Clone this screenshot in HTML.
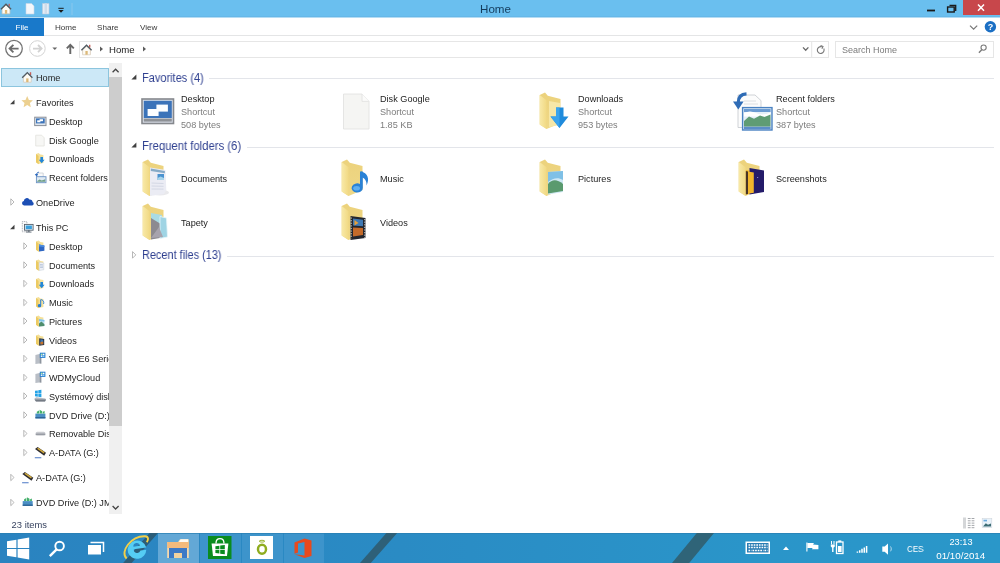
<!DOCTYPE html>
<html><head><meta charset="utf-8"><title>Home</title>
<style>
*{box-sizing:border-box;margin:0;padding:0}
html,body{width:1000px;height:563px;overflow:hidden;background:#fff;font-family:"Liberation Sans",sans-serif;font-size:9.1px;color:#1e1e1e}
.a{position:absolute}
svg{position:absolute;overflow:visible}
#title{left:0;top:0;width:1000px;height:18px;background:#6abfef;border-bottom:1px solid #b4dcf4;box-shadow:inset 0 -1px 0 #66b8e8}
#ttl{left:400px;width:191px;top:2px;text-align:center;font-size:11.6px;color:#143c5c;line-height:14px}
#close{left:963px;top:0;width:37px;height:15px;background:#c8474b}
#ribbon{left:0;top:18px;width:1000px;height:18.400px;background:#fff;border-bottom:1px solid #e4e5e6}
#file{left:0;top:18px;width:44px;height:17.500px;background:#1979ca;color:#fff;text-align:center;line-height:19.600px;font-size:8.100px}
.tab{top:18px;height:18px;line-height:19.600px;font-size:8.100px;color:#3a3a3a}
#addr{left:79px;top:41px;width:750px;height:17px;border:1px solid #e6e6e6;background:#fff}
#search{left:835px;top:41px;width:159px;height:17px;border:1px solid #e6e6e6;background:#fff;color:#7b7b7b;font-size:9px;line-height:15px;padding-left:6px;padding-top:1px}
#sb{left:109px;top:63px;width:13px;height:451px;background:#f0f0f0}
#thumb{left:109px;top:77px;width:13px;height:349px;background:#cdcdcd}
.n,.it,.hdr,.tab,#file,#ttl,#search,#status,.tray,.gs{will-change:transform}
.n{position:absolute;white-space:nowrap;font-size:9.15px;color:#1e1e1e;line-height:12px;height:12px;overflow:hidden}
#sel{left:1px;top:68px;width:108px;height:18.500px;background:#cce8f7;border:1px solid #8cc5de}
.hdr{position:absolute;font-size:12px;line-height:14px;color:#2f4090;white-space:nowrap;transform-origin:0 50%;transform:scaleX(.935)}
.ln{position:absolute;height:1px;background:#e3e5ea}
.it{position:absolute;font-size:9.15px;line-height:12px;white-space:nowrap;color:#1e1e1e}
.it span{color:#7d7d7d}
#status{left:0;top:514px;width:1000px;height:19px;background:#fff;font-size:9.400px;color:#36425f}
#task{left:0;top:533px;width:1000px;height:30px;background:linear-gradient(90deg,#2a83c0 0%,#2a8bc4 40%,#2a95c9 75%,#2a97c9 100%);overflow:hidden}
.tb{position:absolute;top:0;height:30px}
.tray{position:absolute;color:#fff;font-size:9.2px;white-space:nowrap}
</style></head><body>
<div id="title" class="a"><div id="ttl" class="a">Home</div><div id="close" class="a"></div>
<svg class="a" style="left:0;top:0" width="1000" height="18" viewBox="0 0 1000 18">
<!-- quick access icons -->
<g id="house1"><g transform="translate(.2,2.600)"><path d="M1.900 6.200v5h7.800v-5L5.800 2.400z" fill="#fdfbf5" stroke="#d2c4b2" stroke-width=".7"/><rect x="8.300" y="1.200" width="1.400" height="2.800" fill="#c8605a"/><path d="M.7 6.700L5.800 1.600l5.100 5.100" fill="none" stroke="#505a62" stroke-width="1.300"/><rect x="4.700" y="7.400" width="2.300" height="3.700" fill="#dcb878"/></g></g>
<path d="M26 3.5h5.5l2.5 2.5v8h-8z" fill="#f4f7fb" stroke="#c9d6e6" stroke-width=".6"/>
<path d="M42.5 3.5h6.5v10.5h-6.5z" fill="#e6edf5" stroke="#bccbdc" stroke-width=".6"/><path d="M44.5 3.5h2.5v10.5h-2.5z" fill="#cfdcea"/>
<rect x="58.3" y="7.8" width="5.4" height="1" fill="#1a1a1a"/><path d="M58.3 10 h5.4 l-2.7 2.8z" fill="#1a1a1a"/>
<rect x="71.5" y="3" width="1" height="12" fill="#88c8ee"/>
<!-- window buttons -->
<rect x="927" y="9.6" width="8" height="1.8" fill="#1a1a1a"/>
<path d="M949.5 5.3h6.2v5.6" fill="none" stroke="#1a1a1a" stroke-width="1.3"/><rect x="947.6" y="7" width="6.6" height="5" fill="none" stroke="#1a1a1a" stroke-width="1.4"/>
<path d="M978 4.5l6 6.2M984 4.5l-6 6.2" stroke="#fff" stroke-width="1.5"/>
</svg></div>
<div id="ribbon" class="a"></div><div id="file" class="a">File</div>
<div class="tab a" style="left:54.5px">Home</div><div class="tab a" style="left:97px">Share</div><div class="tab a" style="left:139.5px">View</div>
<svg class="a" style="left:0;top:18px" width="1000" height="19" viewBox="0 0 1000 19">
<path d="M970 7.6l3.6 3.6 3.6-3.6" fill="none" stroke="#777" stroke-width="1.2"/>
<circle cx="990.400" cy="8.700" r="5.700" fill="#1b6fc4"/><text x="990.400" y="12.2" font-family="Liberation Sans" font-weight="bold" font-size="9" fill="#fff" text-anchor="middle">?</text>
</svg>
<div id="addr" class="a"></div><div id="search" class="a">Search Home</div>
<svg class="a" style="left:0;top:37px" width="1000" height="26" viewBox="0 37 1000 26">
<circle cx="14" cy="48.6" r="8.3" fill="#fff" stroke="#747474" stroke-width="1.3"/>
<path d="M18.6 48.6h-8.600M13.400 44.800l-3.800 3.800 3.800 3.800" fill="none" stroke="#6c6c6c" stroke-width="1.900"/>
<circle cx="37.4" cy="48.5" r="7.8" fill="#fff" stroke="#d3d3d3" stroke-width="1"/>
<path d="M33 48.6h8.400M38 45l3.600 3.600-3.600 3.600" fill="none" stroke="#d2d2d2" stroke-width="1.800"/>
<path d="M52.4 47.4h4.8l-2.4 2.6z" fill="#666"/>
<path d="M70.3 54v-8.600M66.800 48.400l3.500-3.500 3.500 3.500" fill="none" stroke="#686868" stroke-width="1.900"/>
<g transform="translate(80.5,41)"><g transform="translate(.2,2.600)"><path d="M1.900 6.200v5h7.800v-5L5.800 2.400z" fill="#fdfbf5" stroke="#d2c4b2" stroke-width=".7"/><rect x="8.300" y="1.200" width="1.400" height="2.800" fill="#c8605a"/><path d="M.7 6.700L5.800 1.600l5.100 5.100" fill="none" stroke="#505a62" stroke-width="1.300"/><rect x="4.700" y="7.400" width="2.300" height="3.700" fill="#dcb878"/></g></g>
<path d="M100 46.600l3 2.500-3 2.500z" fill="#5c5c5c"/>
<path d="M143 46.600l3 2.500-3 2.500z" fill="#5c5c5c"/>
<path d="M803 47.4l2.700 2.900 2.700-2.900" fill="none" stroke="#6a6a6a" stroke-width="1.300"/>
<rect x="811.200" y="42" width="1" height="15" fill="#e4e4e4"/>
<path d="M823.800 48.600a3.400 3.400 0 1 1-2-1.800" fill="none" stroke="#777" stroke-width="1.100"/><path d="M820.600 45.400l2.400 1.100-1.100 2.300" fill="none" stroke="#777" stroke-width="1.100"/>
<circle cx="983.600" cy="47.600" r="2.600" fill="none" stroke="#7a7a7a" stroke-width="1.100"/><path d="M981.700 49.700l-2.800 3" stroke="#7a7a7a" stroke-width="1.300"/>
</svg>
<div class="a gs" style="left:109.300px;top:43px;font-size:9.6px;line-height:14px;color:#222">Home</div>
<div id="sel" class="a"></div>
<div id="sb" class="a"></div><div id="thumb" class="a"></div>
<svg class="a" style="left:109px;top:63px" width="13" height="451" viewBox="0 0 13 451"><path d="M3.6 9.2l3-3 3 3" fill="none" stroke="#444" stroke-width="1.3"/><path d="M3.6 443l3 3 3-3" fill="none" stroke="#444" stroke-width="1.3"/></svg>
<div class="n" style="left:36.4px;top:72px;width:72.6px">Home</div>
<div class="n" style="left:36.4px;top:97px;width:72.6px">Favorites</div>
<div class="n" style="left:49.3px;top:116px;width:59.7px">Desktop</div>
<div class="n" style="left:49.3px;top:135px;width:59.7px">Disk Google</div>
<div class="n" style="left:49.3px;top:153px;width:59.7px">Downloads</div>
<div class="n" style="left:49.3px;top:172px;width:59.7px">Recent folders</div>
<div class="n" style="left:36.4px;top:197px;width:72.6px">OneDrive</div>
<div class="n" style="left:36.4px;top:222px;width:72.6px">This PC</div>
<div class="n" style="left:49.3px;top:241px;width:59.7px">Desktop</div>
<div class="n" style="left:49.3px;top:260px;width:59.7px">Documents</div>
<div class="n" style="left:49.3px;top:278px;width:59.7px">Downloads</div>
<div class="n" style="left:49.3px;top:297px;width:59.7px">Music</div>
<div class="n" style="left:49.3px;top:316px;width:59.7px">Pictures</div>
<div class="n" style="left:49.3px;top:335px;width:59.7px">Videos</div>
<div class="n" style="left:49.3px;top:353px;width:59.7px">VIERA E6 Serie</div>
<div class="n" style="left:49.3px;top:372px;width:59.7px">WDMyCloud</div>
<div class="n" style="left:49.3px;top:391px;width:59.7px">Systémový disk</div>
<div class="n" style="left:49.3px;top:410px;width:59.7px">DVD Drive (D:) JM</div>
<div class="n" style="left:49.3px;top:428px;width:59.7px">Removable Disk</div>
<div class="n" style="left:49.3px;top:447px;width:59.7px">A-DATA (G:)</div>
<div class="n" style="left:36.4px;top:472px;width:72.6px">A-DATA (G:)</div>
<div class="n" style="left:36.4px;top:497px;width:72.6px">DVD Drive (D:) JM</div>
<svg class="a" style="left:0;top:0" width="109" height="533" viewBox="0 0 109 533"><g transform="translate(21.5,71) scale(1)"><path d="M1.900 6.200v5h7.800v-5L5.800 2.400z" fill="#fdfbf5" stroke="#d2c4b2" stroke-width=".7"/><rect x="8.300" y="1.200" width="1.400" height="2.800" fill="#c8605a"/><path d="M.7 6.700L5.800 1.600l5.100 5.100" fill="none" stroke="#505a62" stroke-width="1.300"/><rect x="4.700" y="7.400" width="2.300" height="3.700" fill="#dcb878"/></g><g transform="translate(21.5,96) scale(1)"><path d="M5.7 0l1.7 3.9 4.1.4-3.1 2.8.9 4.1-3.6-2.1-3.6 2.1.9-4.1L-.1 4.3l4.1-.4z" fill="#ecd090"/></g><path d="M14.5 99.8v4.400h-4.400z" fill="#404040"/><g transform="translate(34.2,115) scale(1)"><rect x=".5" y="2.200" width="11.300" height="8.400" fill="#dfe6ee" stroke="#8a8f98" stroke-width="1"/><rect x="1.800" y="3.400" width="8.700" height="5" fill="#3c74ba"/><rect x="3" y="5.300" width="3.200" height="2" fill="#fff"/><rect x="5.400" y="4.200" width="3.400" height="2" fill="#fff"/></g><g transform="translate(34.2,134) scale(1)"><path d="M1.500 1.200h6l2.500 2.600v8.200h-8.500z" fill="#f7f7f5" stroke="#e0e0da" stroke-width=".7"/></g><g transform="translate(34.2,152.5) scale(1)"><path d="M1.800 1.400l2.600-1 1.800 1.500 3 .7v8l-5 1-2.400-1.900z" fill="#f4e09a"/><path d="M1.800 1.400l2.600 2v8.300l-2.600-2z" fill="#ecca62"/><path d="M6.2 4.5h2.6v2.8h1.6L7.5 10.8 4.6 7.3h1.6z" fill="#2487d6"/></g><g transform="translate(34.2,171.5) scale(1)"><path d="M3 1.5h6v8H3z" fill="#fafafa" stroke="#b9c0c8" stroke-width=".6"/><rect x="2.2" y="5.2" width="9.6" height="6" fill="#dfe9f3" stroke="#6d93c4" stroke-width=".9"/><path d="M3 9.5l2.5-1.6 2 1 3.5-1.2v2.6H3z" fill="#6f9f86"/><path d="M.6 2.6h3.4L2.3 5.2z" fill="#2f6cc0"/><path d="M2.3 3c.2-1.6 1.2-2.2 2.4-2.3" stroke="#2f6cc0" stroke-width="1" fill="none"/></g><g transform="translate(21.5,196) scale(1)"><path d="M2.6 9.6a2.4 2.4 0 0 1-.3-4.7 3 3 0 0 1 5.500-1.4 2.600 2.600 0 0 1 3.3 2.500 1.900 1.900 0 0 1-.5 3.600z" fill="#1c4fb5"/></g><path d="M10.8 198.8l3.200 3.200-3.200 3.200z" fill="#fff" stroke="#a6a6a6" stroke-width=".8"/><g transform="translate(21.5,221) scale(1)"><rect x=".8" y=".6" width="4.6" height="10.2" fill="#fbfbfb" stroke="#8a8f98" stroke-width=".7" stroke-dasharray="1 .7"/><rect x="3" y="3.400" width="8.6" height="5.800" fill="#e8f4fb" stroke="#55606c" stroke-width=".9"/><rect x="4.200" y="4.500" width="6.200" height="3.600" fill="#3aa0dc"/><rect x="6.400" y="9.400" width="1.800" height="1.300" fill="#55606c"/><rect x="4.600" y="10.600" width="5.400" height=".9" fill="#55606c"/></g><path d="M14.5 224.8v4.400h-4.400z" fill="#404040"/><g transform="translate(34.2,240) scale(1)"><path d="M1.800 1.400l2.600-1 1.800 1.500 3 .7v8l-5 1-2.400-1.900z" fill="#f4e09a"/><path d="M1.800 1.400l2.600 2v8.300l-2.600-2z" fill="#ecca62"/><path d="M4.800 4.400l5.400 1v5.400l-5.400.600z" fill="#2f67c3"/><path d="M4.800 4.400l5.400 1v1.600l-5.400-.6z" fill="#4d8ee0"/></g><path d="M23.8 242.8l3.200 3.200-3.200 3.200z" fill="#fff" stroke="#a6a6a6" stroke-width=".8"/><g transform="translate(34.2,259) scale(1)"><path d="M1.800 1.400l2.600-1 1.800 1.500 3 .7v8l-5 1-2.400-1.900z" fill="#f4e09a"/><path d="M1.800 1.400l2.600 2v8.300l-2.600-2z" fill="#ecca62"/><path d="M5 3.200l4.600.8v6.800l-4.600.700z" fill="#eef1f7" stroke="#b8c2d4" stroke-width=".4"/><path d="M5.800 5.400l3 .4M5.800 6.900l3 .3M5.800 8.400l3 .2" stroke="#8fa3c4" stroke-width=".5"/></g><path d="M23.8 261.8l3.200 3.200-3.200 3.200z" fill="#fff" stroke="#a6a6a6" stroke-width=".8"/><g transform="translate(34.2,277.5) scale(1)"><path d="M1.800 1.400l2.600-1 1.800 1.500 3 .7v8l-5 1-2.400-1.900z" fill="#f4e09a"/><path d="M1.800 1.400l2.600 2v8.300l-2.600-2z" fill="#ecca62"/><path d="M6.2 4.5h2.6v2.8h1.6L7.5 10.8 4.6 7.3h1.6z" fill="#2487d6"/></g><path d="M23.8 280.3l3.200 3.200-3.200 3.200z" fill="#fff" stroke="#a6a6a6" stroke-width=".8"/><g transform="translate(34.2,296.5) scale(1)"><path d="M1.800 1.400l2.600-1 1.800 1.500 3 .7v8l-5 1-2.400-1.900z" fill="#f4e09a"/><path d="M1.800 1.400l2.600 2v8.300l-2.600-2z" fill="#ecca62"/><path d="M7 3v6.200a1.700 1.600 0 1 1-1-1.400V3z" fill="#2a7fd4"/><path d="M7 3c2.200.8 3 2.400 2.400 4.400" stroke="#2a7fd4" stroke-width="1" fill="none"/></g><path d="M23.8 299.3l3.200 3.200-3.200 3.200z" fill="#fff" stroke="#a6a6a6" stroke-width=".8"/><g transform="translate(34.2,315) scale(1)"><path d="M1.800 1.400l2.600-1 1.800 1.500 3 .7v8l-5 1-2.400-1.900z" fill="#f4e09a"/><path d="M1.800 1.400l2.600 2v8.300l-2.600-2z" fill="#ecca62"/><path d="M4.800 4l5.400.900v6l-5.400.600z" fill="#bfe0f0"/><path d="M4.800 8.400l2.400-1.800 3 2.600v1.700l-5.400.600z" fill="#4f8d6c"/><path d="M4.800 4l5.400.900v1.600l-5.400-.4z" fill="#7fc2ea"/></g><path d="M23.8 317.8l3.200 3.200-3.200 3.200z" fill="#fff" stroke="#a6a6a6" stroke-width=".8"/><g transform="translate(34.2,334) scale(1)"><path d="M1.800 1.400l2.600-1 1.800 1.500 3 .7v8l-5 1-2.400-1.900z" fill="#f4e09a"/><path d="M1.800 1.400l2.600 2v8.300l-2.600-2z" fill="#ecca62"/><path d="M5 4.200l5 .9v6l-5 .6z" fill="#2b2f3a"/><path d="M6.200 5.200l2.800.5v4.600l-2.800.3z" fill="#3a78b8"/><path d="M6.200 8l2.800-.4v2.700l-2.800.3z" fill="#c8742a"/></g><path d="M23.8 336.8l3.200 3.200-3.200 3.200z" fill="#fff" stroke="#a6a6a6" stroke-width=".8"/><g transform="translate(34.2,352.5) scale(1)"><path d="M1.200 2.400l4-1v9.600l-4 .6z" fill="#b9bec6"/><path d="M5.200 1.400l2 .4v9.400l-2-.2z" fill="#8d949e"/><rect x="5.600" y="0.200" width="5.600" height="5.200" fill="#2a7fd0"/><rect x="6.600" y="1.200" width="1.600" height="1.400" fill="#b8f0a0"/><rect x="8.600" y="1.200" width="1.600" height="1.400" fill="#fff"/><rect x="6.600" y="3" width="1.600" height="1.400" fill="#fff"/><rect x="8.600" y="3" width="1.600" height="1.400" fill="#9fe0f8"/></g><path d="M23.8 355.3l3.200 3.200-3.200 3.200z" fill="#fff" stroke="#a6a6a6" stroke-width=".8"/><g transform="translate(34.2,371.5) scale(1)"><path d="M1.200 2.400l4-1v9.600l-4 .6z" fill="#b9bec6"/><path d="M5.200 1.400l2 .4v9.400l-2-.2z" fill="#8d949e"/><rect x="5.600" y="0.200" width="5.600" height="5.200" fill="#2a7fd0"/><rect x="6.600" y="1.200" width="1.600" height="1.400" fill="#b8f0a0"/><rect x="8.600" y="1.200" width="1.600" height="1.400" fill="#fff"/><rect x="6.600" y="3" width="1.600" height="1.400" fill="#fff"/><rect x="8.600" y="3" width="1.600" height="1.400" fill="#9fe0f8"/></g><path d="M23.8 374.3l3.200 3.200-3.200 3.200z" fill="#fff" stroke="#a6a6a6" stroke-width=".8"/><g transform="translate(34.2,390) scale(1)"><path d="M.8 .8l2.800-.4v2.900H.8zM4.100 .3L7.200-.2v3.500H4.100zM.8 3.800h2.800v2.900L.8 6.300zM4.100 3.800h3.100v3.400l-3.100-.4z" fill="#23a2e6"/><path d="M.4 8.200l1.800-1 9 1.400.6 1.400-1 1.400H1.800L.4 10z" fill="#b4bac2"/><path d="M.4 9.600h11.400l-1 1.800H1.800z" fill="#747b84"/></g><path d="M23.8 392.8l3.200 3.200-3.200 3.200z" fill="#fff" stroke="#a6a6a6" stroke-width=".8"/><g transform="translate(34.2,409) scale(1)"><rect x="1.200" y="4.600" width="10" height="4.800" fill="#4a8ec4"/><rect x="1.200" y="8" width="10" height="1.400" fill="#2f6496"/><path d="M2.600 4.600V2.800L4.800 1.600v3zM5.400 4.600V.8l2.600 1.400v2.400zM8.600 4.600V2.800l1.800-.8v2.600z" fill="#46b06c"/></g><path d="M23.8 411.8l3.200 3.200-3.200 3.200z" fill="#fff" stroke="#a6a6a6" stroke-width=".8"/><g transform="translate(34.2,427.5) scale(1)"><rect x="1.400" y="4.200" width="9.800" height="3.600" rx="1.700" fill="#c9cbd0"/><rect x="1.400" y="6" width="9.800" height="1.800" rx=".9" fill="#989ca4"/></g><path d="M23.8 430.3l3.200 3.200-3.200 3.200z" fill="#fff" stroke="#a6a6a6" stroke-width=".8"/><g transform="translate(34.2,446.5) scale(1)"><path d="M.8 2.600l2.600-2.200 8.400 5.800-1.800 3z" fill="#2e2c30"/><path d="M2.800 2.200l1.200-1 6.400 4.400-.8 1.300z" fill="#cfa93c"/><rect x=".6" y="10.600" width="6.500" height="1.200" fill="#6a8fd0"/></g><path d="M23.8 449.3l3.200 3.200-3.200 3.200z" fill="#fff" stroke="#a6a6a6" stroke-width=".8"/><g transform="translate(21.5,471.5) scale(1)"><path d="M.8 2.600l2.600-2.200 8.400 5.800-1.800 3z" fill="#2e2c30"/><path d="M2.800 2.200l1.200-1 6.400 4.400-.8 1.300z" fill="#cfa93c"/><rect x=".6" y="10.600" width="6.500" height="1.200" fill="#6a8fd0"/></g><path d="M10.8 474.3l3.200 3.200-3.200 3.200z" fill="#fff" stroke="#a6a6a6" stroke-width=".8"/><g transform="translate(21.5,496.5) scale(1)"><rect x="1.200" y="4.600" width="10" height="4.800" fill="#4a8ec4"/><rect x="1.200" y="8" width="10" height="1.400" fill="#2f6496"/><path d="M2.600 4.600V2.800L4.800 1.600v3zM5.400 4.600V.8l2.600 1.400v2.400zM8.600 4.600V2.800l1.800-.8v2.600z" fill="#46b06c"/></g><path d="M10.8 499.3l3.200 3.200-3.200 3.200z" fill="#fff" stroke="#a6a6a6" stroke-width=".8"/></svg>
<div class="hdr" style="left:141.500px;top:70.8px;transform:scaleX(0.917)">Favorites (4)</div>
<div class="ln" style="left:209px;top:78.0px;width:785px"></div>
<svg class="a" style="left:130px;top:72.8px" width="8" height="8"><path d="M6.400 1.400v5h-5z" fill="#404040"/></svg>
<div class="hdr" style="left:141.500px;top:139.3px;transform:scaleX(0.94)">Frequent folders (6)</div>
<div class="ln" style="left:247px;top:146.5px;width:747px"></div>
<svg class="a" style="left:130px;top:141.3px" width="8" height="8"><path d="M6.400 1.400v5h-5z" fill="#404040"/></svg>
<div class="hdr" style="left:141.500px;top:248.3px;transform:scaleX(0.91)">Recent files (13)</div>
<div class="ln" style="left:226.5px;top:255.5px;width:767.5px"></div>
<svg class="a" style="left:130px;top:250px" width="8" height="10"><path d="M2.500 1.600l3.300 3.300-3.300 3.300z" fill="#fff" stroke="#a6a6a6" stroke-width=".8"/></svg>
<div class="it" style="left:181.3px;top:93px">Desktop</div><div class="it" style="left:181.3px;top:106px"><span>Shortcut</span></div><div class="it" style="left:181.3px;top:119px"><span>508 bytes</span></div>
<div class="it" style="left:379.5px;top:93px">Disk Google</div><div class="it" style="left:379.5px;top:106px"><span>Shortcut</span></div><div class="it" style="left:379.5px;top:119px"><span>1.85 KB</span></div>
<div class="it" style="left:577.8px;top:93px">Downloads</div><div class="it" style="left:577.8px;top:106px"><span>Shortcut</span></div><div class="it" style="left:577.8px;top:119px"><span>953 bytes</span></div>
<div class="it" style="left:776.2px;top:93px">Recent folders</div><div class="it" style="left:776.2px;top:106px"><span>Shortcut</span></div><div class="it" style="left:776.2px;top:119px"><span>387 bytes</span></div>
<div class="it" style="left:181.3px;top:173px">Documents</div>
<div class="it" style="left:379.5px;top:173px">Music</div>
<div class="it" style="left:577.8px;top:173px">Pictures</div>
<div class="it" style="left:776.2px;top:173px">Screenshots</div>
<div class="it" style="left:181.3px;top:217px">Tapety</div>
<div class="it" style="left:379.5px;top:217px">Videos</div>
<svg class="a" style="left:0;top:0" width="1000" height="300" viewBox="0 0 1000 300"><defs><linearGradient id="fg" x1="0" y1="0" x2="0" y2="1"><stop offset="0" stop-color="#ecd27c"/><stop offset="1" stop-color="#efd888"/></linearGradient><linearGradient id="ff" x1="0" y1="0" x2="1" y2="0"><stop offset="0" stop-color="#f8e9a8"/><stop offset="1" stop-color="#f1d983"/></linearGradient></defs><rect x="142" y="99" width="31.500" height="24.500" fill="#d9dfe8" stroke="#85888d" stroke-width="1.600"/><rect x="143.800" y="100.800" width="28" height="17.200" fill="#3b73b9"/><rect x="143.800" y="118.600" width="28" height="3" fill="#8e9196"/><rect x="147.600" y="109" width="11" height="7" fill="#fbfdff"/><rect x="156.400" y="104.600" width="11.500" height="7" fill="#fbfdff"/><path d="M343.500 94h18.500l7 7.400V129h-25.500z" fill="#f5f5f3" stroke="#e0e0de" stroke-width=".8"/><path d="M362 94v7.400h7" fill="#fbfbfa" stroke="#e0e0de" stroke-width=".8"/><g transform="translate(539,93)"><path d="M0.700 2L6 -.4l2.800 3.200 12.700 3.200v24L7.600 36 .7 31.600z" fill="url(#fg)"/><path d="M10 8l11 2v22l-11 2z" fill="#f6e7a8"/><path d="M0.700 2L7.600 7.200V36L.7 31.600z" fill="url(#ff)"/></g><path d="M556 107.500h7.500v9h5L559.500 128 550.500 116.500h5.500z" fill="#1f8bdc"/><path d="M556 107.500h3.500v20.500L550.500 116.500h5.500z" fill="#3aa4ee"/><path d="M738 95h17l6 5.600V127.500h-23z" fill="#fcfcfc" stroke="#c4c8cd" stroke-width=".8"/><path d="M744 101h12M744 104h14" stroke="#d5d8dc" stroke-width=".8"/><rect x="742.600" y="107.600" width="29.400" height="22.400" fill="#e6eff8" stroke="#4a82c2" stroke-width="1.400"/><rect x="744" y="126.600" width="26.600" height="2.600" fill="#5b8dc8"/><rect x="744" y="109" width="26.600" height="3" fill="#6b9bd2"/><path d="M744 113c4-2 8-2 12 0s9 2 14.600-.5v4H744z" fill="#fff"/><path d="M744 121l5-4.500 5 2.200 6-3.200 4.500 1.600 6-2.600V126.600H744z" fill="#5f9c74"/><path d="M733 101.500h10.600l-5.300 8z" fill="#2f6cb6"/><path d="M738.300 102.500c0-5.500 3.200-8.300 8.200-8.600" stroke="#2f6cb6" stroke-width="3.200" fill="none"/><ellipse cx="160" cy="192.500" rx="9" ry="3" fill="#e9e9ec"/><g transform="translate(142,160)"><path d="M0.700 2L6 -.4l2.800 3.200 12.700 3.200v24L7.600 36 .7 31.600z" fill="url(#fg)"/><path d="M8 7.500l15.500 2.600.8 20-2.300 4-14 2z" fill="#ebecf4"/><path d="M8.800 8.600l14 2.300v2.400L8.800 11z" fill="#86aac6"/><rect x="15.500" y="14" width="6.500" height="6" fill="#4a93d0"/><path d="M15.500 18l3-1.500 3.500 1.500v2h-6.500z" fill="#a8d4ea"/><path d="M9.500 23l12 .5M9.500 26l12 .3M9.500 29l12 .1" stroke="#cdd2e0" stroke-width=".8"/><path d="M0.700 2L7.600 7.200V36L.7 31.600z" fill="url(#ff)"/></g><g transform="translate(341,160)"><path d="M0.700 2L6 -.4l2.800 3.200 12.700 3.200v24L7.600 36 .7 31.600z" fill="url(#fg)"/><path d="M0.700 2L7.600 7.200V36L.7 31.600z" fill="url(#ff)"/></g><path d="M362.800 171.500v16.500a5.600 4.600 0 1 1-2.800-4V171.500z" fill="#2a82d6"/><path d="M361 171.500c6.500 1.500 9 7 5.500 14 .4-5-2-7.500-5.500-8.500z" fill="#2a82d6"/><ellipse cx="356.600" cy="188.200" rx="3.400" ry="2.300" fill="#5eaef0"/><g transform="translate(539,160)"><path d="M0.700 2L6 -.4l2.800 3.200 12.700 3.200v24L7.600 36 .7 31.600z" fill="url(#fg)"/><path d="M9 12l15 -1v21l-15 2.500z" fill="#cfe8f4"/><path d="M9 12l15-1v9c-5-3-10-2-15 2z" fill="#7fc0e6"/><path d="M9 24c4-5 9-5 15 0v7l-15 2.500z" fill="#5a9a6e"/><path d="M0.700 2L7.600 7.200V36L.7 31.600z" fill="url(#ff)"/></g><g transform="translate(738,160)"><path d="M0.700 2L6 -.4l2.800 3.200 12.700 3.200v24L7.600 36 .7 31.600z" fill="url(#fg)"/><path d="M7.600 10l8.500 1.500v21.500l-8.500 1.500z" fill="#f0b429"/><path d="M11.500 8l14.500 2.400v21.600L11.500 34.500z" fill="#241b69"/><path d="M7.600 11l2.400.5v22.500l-2.400.6z" fill="#4a3424"/><path d="M10 11.500l5.800 1v20.200l-5.800 1.100z" fill="#f2b62c"/><rect x="19" y="17" width="1.200" height="1" fill="#8a84c8"/><path d="M0.700 2L7.600 7.200V36L.7 31.600z" fill="url(#ff)"/></g><g transform="translate(142,204)"><path d="M0.700 2L6 -.4l2.800 3.200 12.700 3.200v24L7.600 36 .7 31.600z" fill="url(#fg)"/><path d="M9 9l11 2v20l-11 3z" fill="#a9dbe4"/><path d="M9 14l9 5.500V34l-9 1.500z" fill="#8c8a90"/><path d="M18 12.500l6.500 1.500 1 19-7.500 1.500z" fill="#9fd4e4" stroke="#e8f6fa" stroke-width=".8"/><path d="M9 34l8-11 4 10z" fill="#a7a3ad"/><path d="M0.700 2L7.600 7.200V36L.7 31.600z" fill="url(#ff)"/></g><g transform="translate(341,204)"><path d="M0.700 2L6 -.4l2.800 3.200 12.700 3.200v24L7.600 36 .7 31.600z" fill="url(#fg)"/><path d="M9.500 12l15 2v20l-15 2z" fill="#23262e"/><path d="M12 14.400l10 1.400v6.500l-10-.8z" fill="#3f79b4"/><path d="M12 23.500l10 .6v7l-10 1.300z" fill="#c36a2a"/><path d="M13.500 16l4 3-4 2.500z" fill="#e8a038"/><path d="M10.200 13.500v21M23.800 15v19" stroke="#eee" stroke-width=".9" stroke-dasharray="1.200 1.400"/><path d="M0.700 2L7.600 7.200V36L.7 31.600z" fill="url(#ff)"/></g></svg>
<div id="status" class="a"><div class="a" style="left:11.600px;top:5px;line-height:11px">23 items</div></div>
<svg class="a" style="left:960px;top:514px" width="40" height="19" viewBox="960 514 40 19">
<rect x="963" y="517.500" width="3" height="11" fill="#d4d6d8"/><path d="M967.800 518.500h2.800M971.600 518.500h2.800M967.800 520.800h2.800M971.600 520.800h2.800M967.800 523.100h2.800M971.600 523.100h2.800M967.800 525.400h2.800M971.600 525.400h2.800M967.800 527.700h2.800M971.600 527.700h2.800" stroke="#a3a6aa" stroke-width="1"/>
<rect x="982.200" y="518.600" width="9.600" height="9" fill="#e8f2fa" stroke="#cfd6dd" stroke-width=".6"/><path d="M983.200 526.200l2.600-3 2.200 1.600 3-1.400v3.200h-7.800z" fill="#3c6c74"/><rect x="983.500" y="519.800" width="3.500" height="1.600" fill="#6aa9dc"/>
</svg>
<div id="task" class="a"><div class="tb" style="left:158px;width:41px;background:#63a8d6"></div><div class="tb" style="left:200px;width:41px;background:#3d94cb"></div><div class="tb" style="left:242px;width:41px;background:#3d94cb"></div><div class="tb" style="left:284px;width:40px;background:#3d94cb"></div><svg class="a" style="left:0;top:0" width="1000" height="30" viewBox="0 533 1000 30"><rect x="0" y="533" width="1000" height="1" fill="#2a7fb2" opacity=".7"/><path d="M149.500 533h8.500l-26.400 30h-8.500z" fill="#2c5d78"/><path d="M386.400 533h10.800l-26.400 30h-10.800z" fill="#2e6078"/><path d="M696.800 533h17.200l-24.800 30h-17.200z" fill="#2f6478"/><path d="M7 541.200l9.400-1.500v8.200H7zM17.600 539.500l11.600-1.900v10.300H17.600zM7 549.100h9.400v8.200L7 555.800zM17.600 549.100h11.600v10.300l-11.600-1.900z" fill="#fff"/><circle cx="59.600" cy="546" r="4.300" fill="none" stroke="#fff" stroke-width="1.900"/><path d="M56.600 549.400l-6.800 6.800" stroke="#fff" stroke-width="2.400"/><path d="M90.500 542.500h13v9.500" fill="none" stroke="#fff" stroke-width="1.500"/><rect x="88" y="545" width="13" height="9.500" fill="#fff"/><g transform="rotate(-8 137 549)"><path d="M127.600 551.200a9.400 9.400 0 0 1 18.800-2.400h-12.600a3.400 3.400 0 0 0 6.400 2.200h5.900a9.400 9.400 0 0 1-18.500.2zm6.200-5h6.400a3.200 3.200 0 0 0-6.400 0z" fill="#55cdf4"/></g><path d="M126.600 558.500C119.500 552 131 535.800 145 536.200c3.800.2 3.600 3.400 1.800 6" fill="none" stroke="#f2cf48" stroke-width="1.900"/><path d="M167.200 542h10.800l2-2.800h8.800V558h-21.600z" fill="#f4d9ae"/><rect x="167.200" y="542" width="21.600" height="6" fill="#f4ba7c"/><path d="M179 542l1.600-2.800h7.400V542z" fill="#fdfaf4"/><rect x="169" y="548" width="18" height="10" fill="#3c79c6"/><rect x="174" y="553" width="8" height="5" fill="#f2d2a0"/><rect x="208" y="536" width="23.500" height="23" fill="#0a8c1e"/><path d="M211.600 543.400h16.800l-1.400 12.600h-14z" fill="#fff"/><path d="M216 543.400c0-6.400 8-6.400 8 0" fill="none" stroke="#fff" stroke-width="1.300"/><path d="M215.400 546.200l4-.5v3.600h-4zM220.200 545.600l4.600-.6v4.300h-4.600zM215.400 550.100h4v3.500l-4-.5zM220.200 550.100h4.600v4.200l-4.600-.6z" fill="#0a8c1e"/><rect x="250" y="536" width="23" height="23" fill="#fff"/><ellipse cx="262" cy="549.200" rx="4" ry="4.500" fill="none" stroke="#8fac1e" stroke-width="2.500"/><ellipse cx="262" cy="541.200" rx="2.800" ry=".9" fill="none" stroke="#8fac1e" stroke-width=".9"/><path d="M294.500 542.500l10-4 7 2v15.500l-7 2-10-3.800 10 1.300V542l-6.500 1.600v8.800l-3.500 1.400z" fill="#e8491d"/><rect x="745.500" y="541.500" width="24.500" height="12.500" fill="#fff"/><rect x="747" y="543" width="21.500" height="9.500" fill="#2a7db4"/><path d="M748.500 545h19M748.500 547.600h19M748.500 550.400h3M752.500 550.400h11M764.500 550.400h3" stroke="#fff" stroke-width="1.500" stroke-dasharray="1.700 .9"/><path d="M783 550l3-3.400 3 3.400z" fill="#fff"/><path d="M806.900 542.600v9" stroke="#fff" stroke-width="1.100"/><path d="M807.400 543h6.600l-1 1.500 5.400.5v4.300h-6.400l.6-1.300h-5.200z" fill="#fff"/><rect x="836.500" y="542" width="6.500" height="11.500" fill="none" stroke="#fff" stroke-width="1.300"/><rect x="838.300" y="540.400" width="3" height="1.600" fill="#fff"/><rect x="838" y="546" width="3.600" height="6" fill="#fff"/><path d="M831.500 541v3.400M834 541v3.400" stroke="#fff" stroke-width="1"/><path d="M830.800 544.400h4v2.200l-1.300 1.200v4.200h-1.400v-4.200l-1.300-1.200z" fill="#fff"/><path d="M857.400 552.800v-1.200M859.700 552.800v-2.600M862 552.800v-4M864.300 552.800v-5.400M866.600 552.800v-6.800" stroke="#fff" stroke-width="1.500"/><path d="M882.300 546.400h2.400l3.300-3v11.400l-3.300-3h-2.400z" fill="#fff"/><path d="M890.500 546.500c1 1.400 1 3.400 0 4.800" stroke="#b9dcf0" stroke-width="1" fill="none"/></svg><div class="tray" style="left:907px;top:10.500px;transform-origin:0 50%;transform:scaleX(.87)">CES</div><div class="tray" style="left:926.300px;width:70px;text-align:center;top:4.400px">23:13</div><div class="tray" style="left:925px;width:71.500px;text-align:center;top:17.300px;font-size:9.800px">01/10/2014</div></div>
</body></html>
